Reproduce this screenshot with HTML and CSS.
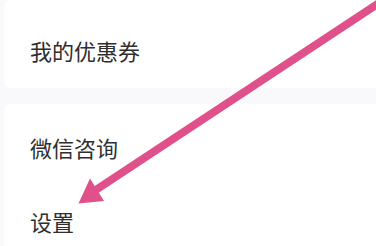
FILE: index.html
```html
<!DOCTYPE html>
<html lang="zh">
<head>
<meta charset="utf-8">
<link rel="stylesheet" href="styles.css">
</head>
<body>
<div class="page">
  <div class="card card-top">
    <div class="row">我的优惠券</div>
  </div>
  <div class="card card-bottom">
    <div class="row">微信咨询</div>
    <div class="row">设置</div>
  </div>
  <svg class="arrow" width="376" height="246" viewBox="0 0 376 246">
    <line x1="382" y1="1" x2="95" y2="190.5" stroke="#e0508a" stroke-width="8"/>
    <polygon points="78.5,203.5 90,178.5 104,201" fill="#e0508a"/>
  </svg>
</div>
</body>
</html>
```
FILE: styles.css
```css
html, body {
  margin: 0;
  padding: 0;
  background: #f9f9fb;
}
.page {
  position: relative;
  width: 376px;
  height: 246px;
  overflow: hidden;
  padding-left: 4px;
  box-sizing: border-box;
  font-family: "Noto Sans CJK SC", "Noto Sans", sans-serif;
}
.card {
  background: #ffffff;
  border-radius: 8px 0 0 8px;
  padding-left: 26px;
}
.card-top {
  height: 88px;
  padding-top: 13px;
  box-sizing: border-box;
}
.card-bottom {
  margin-top: 16px;
  padding-top: 6px;
  height: 200px;
  box-sizing: border-box;
}
.row {
  height: 74px;
  display: flex;
  align-items: center;
  font-size: 22px;
  line-height: 1;
  color: #2f2f2f;
}
.arrow {
  position: absolute;
  left: 0;
  top: 0;
}
```
